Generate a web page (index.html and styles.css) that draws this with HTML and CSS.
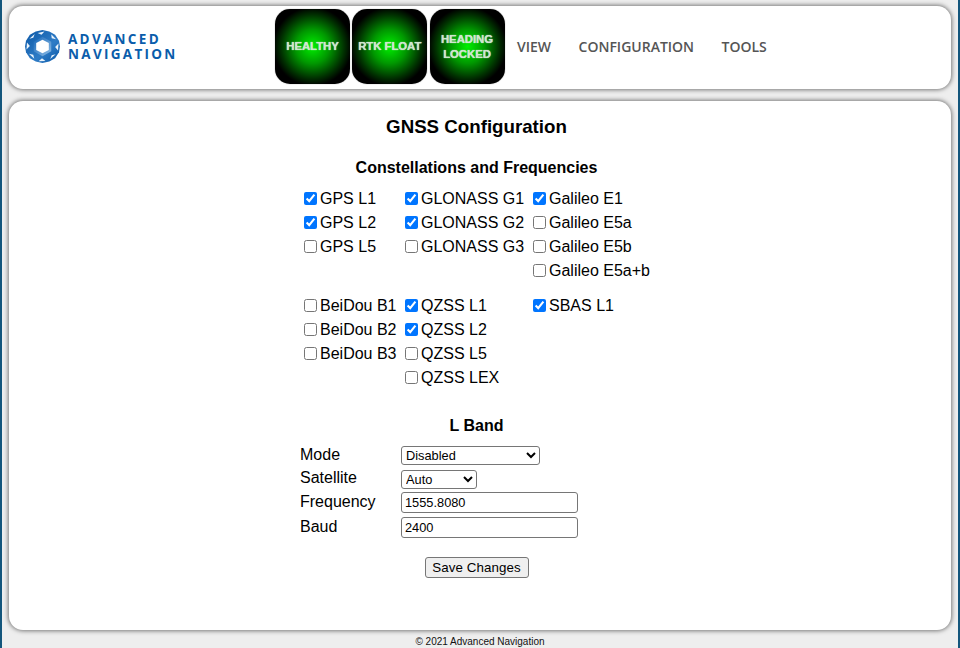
FILE: index.html
```html
<!DOCTYPE html>
<html lang="en">
<head>
<meta charset="utf-8">
<title>GNSS Configuration</title>
<link rel="stylesheet" href="styles.css">
</head>
<body>
<header class="card header">
  <div class="logo">
    <svg class="logo-mark" width="35" height="33" viewBox="0 0 36 34">
      <defs>
        <linearGradient id="ring" x1="0" y1="0" x2="1" y2="1">
          <stop offset="0" stop-color="#0a57a6"/>
          <stop offset="0.6" stop-color="#2f7cc6"/>
          <stop offset="1" stop-color="#0a57a6"/>
        </linearGradient>
        <linearGradient id="swirl" x1="0" y1="0" x2="1" y2="1">
          <stop offset="0" stop-color="#1566b8"/>
          <stop offset="1" stop-color="#8fbde6"/>
        </linearGradient>
      </defs>
      <path d="M18 0 L25 1.5 L31 5 L35 11 L36 17 L35 23 L31 29 L25 32.5 L18 34 L11 32.5 L5 29 L1 23 L0 17 L1 11 L5 5 L11 1.5 Z" fill="url(#ring)"/>
      <path d="M18 7 L27 12 L27 22 L18 27 L9 22 L9 12 Z" fill="url(#swirl)"/>
      <path d="M18 10 L24.5 13.5 L24.5 20.5 L18 24 L11.5 20.5 L11.5 13.5 Z" fill="#fff"/>
      <g fill="#eaf3fb">
        <path d="M13 3 L20 1.6 L17 5 Z"/>
        <path d="M27 4.5 L32 9.5 L27.5 8.5 Z"/>
        <path d="M34.5 14 L34 21 L31 17.5 Z"/>
        <path d="M31.5 25 L26 30 L27.5 26 Z"/>
        <path d="M21 32 L14 32.3 L17.5 29 Z"/>
        <path d="M9.5 29.5 L4 24.5 L8.5 25.5 Z"/>
        <path d="M1.5 20 L2 13 L5 16.5 Z"/>
        <path d="M4.5 9 L10 4 L8.5 8 Z"/>
      </g>
    </svg>
    <div class="logo-text"><span>ADVANCED</span><span>NAVIGATION</span></div>
  </div>
  <div class="lights">
    <div class="light">HEALTHY</div>
    <div class="light">RTK FLOAT</div>
    <div class="light">HEADING LOCKED</div>
  </div>
  <nav class="nav">
    <a href="#">VIEW</a>
    <a href="#">CONFIGURATION</a>
    <a href="#">TOOLS</a>
  </nav>
</header>

<main class="card main">
  <h1>GNSS Configuration</h1>
  <h2>Constellations and Frequencies</h2>
  <div class="constellations">
    <div class="group">
      <div class="col">
        <label><input type="checkbox" checked>GPS L1</label>
        <label><input type="checkbox" checked>GPS L2</label>
        <label><input type="checkbox">GPS L5</label>
      </div>
      <div class="col">
        <label><input type="checkbox" checked>GLONASS G1</label>
        <label><input type="checkbox" checked>GLONASS G2</label>
        <label><input type="checkbox">GLONASS G3</label>
      </div>
      <div class="col">
        <label><input type="checkbox" checked>Galileo E1</label>
        <label><input type="checkbox">Galileo E5a</label>
        <label><input type="checkbox">Galileo E5b</label>
        <label><input type="checkbox">Galileo E5a+b</label>
      </div>
    </div>
    <div class="group">
      <div class="col">
        <label><input type="checkbox">BeiDou B1</label>
        <label><input type="checkbox">BeiDou B2</label>
        <label><input type="checkbox">BeiDou B3</label>
      </div>
      <div class="col">
        <label><input type="checkbox" checked>QZSS L1</label>
        <label><input type="checkbox" checked>QZSS L2</label>
        <label><input type="checkbox">QZSS L5</label>
        <label><input type="checkbox">QZSS LEX</label>
      </div>
      <div class="col">
        <label><input type="checkbox" checked>SBAS L1</label>
      </div>
    </div>
  </div>

  <h2 class="lband-title">L Band</h2>
  <form class="lband">
    <label>Mode</label>
    <select class="control select-mode"><option>Disabled</option></select>
    <label>Satellite</label>
    <select class="control select-sat"><option>Auto</option></select>
    <label>Frequency</label>
    <input class="control text-input" type="text" value="1555.8080">
    <label>Baud</label>
    <input class="control text-input" type="text" value="2400">
  </form>
  <div class="actions"><button type="button">Save Changes</button></div>
</main>

<footer class="footer">© 2021 Advanced Navigation</footer>
</body>
</html>
```

FILE: styles.css
```css
* { box-sizing: border-box; }
html, body { margin: 0; height: 648px; overflow: hidden; }
body {
  display: flex;
  flex-direction: column;
  padding: 6px 7px 0;
  background: #eeeeee;
  border-left: 2px solid #14567c;
  border-right: 2px solid #14567c;
  font-family: "Liberation Sans", Arial, sans-serif;
  color: #000;
}
.card {
  background: #fff;
  border-radius: 14px;
  box-shadow: 0 0 4px 1px #777;
}
.header {
  height: 83px;
  flex: none;
  display: flex;
  align-items: center;
  padding-left: 16px;
}
.logo { display: flex; align-items: center; gap: 8px; width: 250px; margin-top: -2px; }
.logo-mark { flex: none; }
.logo-text {
  display: flex;
  flex-direction: column;
  font-family: "Open Sans", sans-serif;
  font-weight: 700;
  font-size: 13.5px;
  line-height: 14.6px;
  letter-spacing: 2.3px;
  color: #0a5dab;
}
.lights { display: flex; gap: 2.25px; margin-top: -2px; }
.light {
  width: 75px;
  height: 75px;
  display: flex;
  align-items: center;
  justify-content: center;
  text-align: center;
  border-radius: 15px;
  background: radial-gradient(circle at center, #00f000 0, #009800 32%, #003000 60%, #000 74%);
  box-shadow: 0 0 1px #666;
  color: #cfe6cf;
  font-size: 11.3px;
  font-weight: 700;
  line-height: 15px;
  padding: 0 4px;
  text-shadow: 0 0 1px #eee;
}
.nav { display: flex; gap: 27.5px; margin-left: 12.5px; margin-top: -3px; }
.nav a {
  font-family: "Open Sans", sans-serif;
  font-weight: 600;
  font-size: 14px;
  color: #555;
  text-decoration: none;
}
.main {
  margin-top: 12px;
  height: 529px;
  flex: none;
  padding: 16px 7px 0 0;
}
h1 {
  margin: 0;
  height: 20px;
  font-size: 18.72px;
  line-height: 20px;
  text-align: center;
}
h2 {
  margin: 21px 0 0;
  height: 20px;
  font-size: 16px;
  line-height: 20px;
  text-align: center;
}
.constellations { margin: 9px 0 0 291px; }
.group { display: flex; margin-bottom: 11px; }
.group:last-child { margin-bottom: 0; }
.col { display: flex; flex-direction: column; }
.col:nth-child(1) { width: 101px; }
.col:nth-child(2) { width: 128px; }
.col label {
  display: flex;
  align-items: center;
  height: 24px;
  font-size: 16px;
  white-space: nowrap;
}
.col input { margin: -2px 3px 0 4px; flex: none; }
.lband-title { margin-top: 26px; }
.lband {
  display: grid;
  grid-template-columns: 101px 1fr;
  grid-template-rows: 23px 24px 23.5px 26.5px;
  align-items: center;
  margin: 8px 0 0 291px;
}
.lband label { font-size: 16px; margin-top: -2px; }
.control {
  font-family: "Liberation Sans", Arial, sans-serif;
  font-size: 12.8px;
  border: 1px solid #767676;
  border-radius: 3px;
  background: #fff;
  color: #000;
}
.select-mode { width: 139px; height: 19px; padding: 0; }
.select-sat { width: 76px; height: 19px; padding: 0; }
.text-input { width: 177px; height: 21px; padding: 1px 3px; }
.actions { display: flex; justify-content: center; margin-top: 16px; }
button {
  width: 104px;
  height: 21px;
  padding: 0;
  font-family: "Liberation Sans", Arial, sans-serif;
  font-size: 13.33px;
  letter-spacing: 0.1px;
  border: 1px solid #767676;
  border-radius: 3px;
  background: #efefef;
  color: #000;
}
.footer {
  flex: 1;
  padding-top: 6px;
  font-size: 10px;
  line-height: 12px;
  text-align: center;
  color: #111;
}
```
